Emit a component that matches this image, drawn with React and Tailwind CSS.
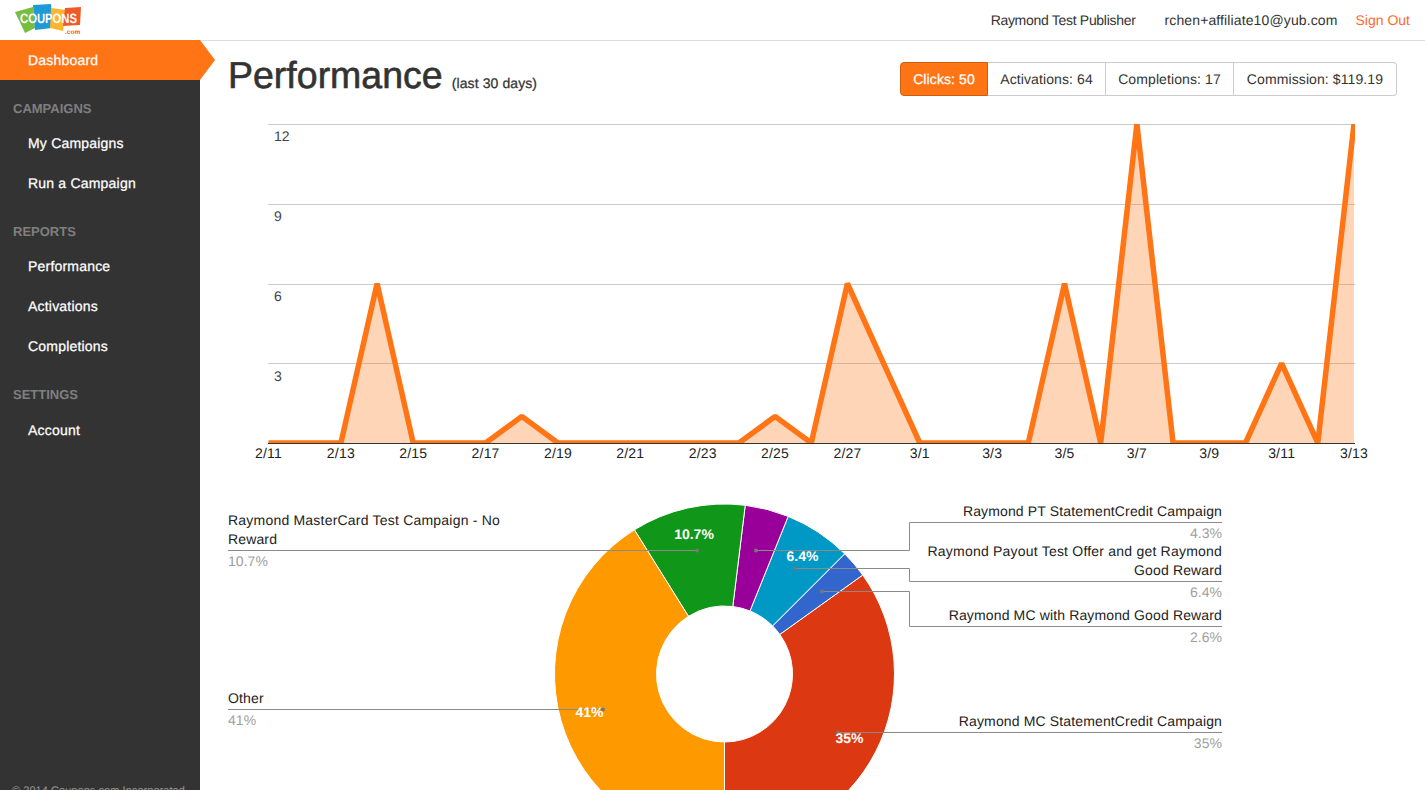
import React from "react";

// =============================
// Data
// =============================
const NAV = [
  { title: "Campaigns", items: ["My Campaigns", "Run a Campaign"], head: "h-[43px]" },
  { title: "Reports", items: ["Performance", "Activations", "Completions"], head: "h-[43px]" },
  { title: "Settings", items: ["Account"], head: "h-[44px]" },
];

const STATS = [
  { label: "Clicks: 50", w: "w-[88px]", cls: "bg-[#ff7414] text-white border-l border-[#cc5f12] rounded-l [-webkit-text-stroke:0.25px]" },
  { label: "Activations: 64", w: "w-[118px]", cls: "bg-white border-[#cccccc]" },
  { label: "Completions: 17", w: "w-[128px]", cls: "bg-white border-[#cccccc]" },
  { label: "Commission: $119.19", w: "w-[163px]", cls: "bg-white border-[#cccccc] rounded-r" },
];

const CLICKS = { 3: 6, 7: 1, 14: 1, 16: 6, 17: 3, 22: 6, 24: 12, 28: 3, 30: 12 };
const DATES = ["2/11", "2/13", "2/15", "2/17", "2/19", "2/21", "2/23", "2/25", "2/27", "3/1", "3/3", "3/5", "3/7", "3/9", "3/11", "3/13"];

const xAt = (i) => 268.5 + (i * 1085.5) / 30;
const yAt = (v) => 443 - (v * 319) / 12;

const SLICES = [
  { color: "#dc3912", from: 54.4, to: 180 },
  { color: "#3366cc", from: 45, to: 54.4 },
  { color: "#0099c6", from: 22, to: 45 },
  { color: "#990099", from: 7, to: 22 },
  { color: "#109618", from: -32, to: 7 },
  { color: "#ff9900", from: 180, to: 328 },
];

// =============================
// Helpers: donut slice path
// =============================
function slicePath(from, to) {
  const cx = 724.5, cy = 674, R = 170, r = 68;
  const pt = (rad, deg) => {
    const a = (deg * Math.PI) / 180;
    return `${(cx + rad * Math.sin(a)).toFixed(2)} ${(cy - rad * Math.cos(a)).toFixed(2)}`;
  };
  const big = to - from > 180 ? 1 : 0;
  return `M${pt(R, from)} A${R} ${R} 0 ${big} 1 ${pt(R, to)} L${pt(r, to)} A${r} ${r} 0 ${big} 0 ${pt(r, from)} Z`;
}

// =============================
// Components
// =============================
function Logo() {
  return (
    <svg width="80" height="34" viewBox="15 5 80 34" className="block">
      <polygon points="15,14 33,9 35,30 25,35" fill="#79bd3e" />
      <polygon points="33,7 51,6 52,30 35,32" fill="#1e9ad6" />
      <polygon points="51,10 66,12 63,33 50,30" fill="#fdb52f" />
      <polygon points="65,10 81,9 80,27 63,28" fill="#f05a28" />
      <text x="20" y="25" fontSize="13.5" fontWeight="700" fill="#fff" textLength="57" lengthAdjust="spacingAndGlyphs">COUPONS</text>
      <text x="65" y="35.5" fontSize="6.5" fontWeight="700" fill="#f05a28">.com</text>
    </svg>
  );
}

function LineChart() {
  const points = Array.from({ length: 31 }, (_, i) => `${xAt(i).toFixed(1)},${yAt(CLICKS[i] || 0).toFixed(1)}`);
  return (
    <svg width="1225" height="370" viewBox="200 110 1225 370" className="block">
      <defs>
        <clipPath id="plot"><rect x="268" y="124" width="1087" height="319.5" /></clipPath>
      </defs>
      {[124.5, 204.5, 284.5, 363.5].map((y) => (
        <line key={y} x1="268" x2="1355" y1={y} y2={y} stroke="#cccccc" />
      ))}
      <g clipPath="url(#plot)">
        <polygon points={`268.5,443 ${points.join(" ")} 1354,443`} fill="#ff7414" fillOpacity="0.3" />
        <polyline points={points.join(" ")} fill="none" stroke="#ff7414" strokeWidth="5.5" strokeLinejoin="bevel" />
      </g>
      <line x1="268" x2="1355" y1="443.5" y2="443.5" stroke="#333333" />
      {[["12", 141], ["9", 221], ["6", 301], ["3", 381]].map(([t, y]) => (
        <text key={t} x="274" y={y} fontSize="14" fill="#444444">{t}</text>
      ))}
      {DATES.map((d, i) => (
        <text key={d} x={xAt(i * 2)} y="458" fontSize="14" letterSpacing="0.2" fill="#222222" textAnchor="middle">{d}</text>
      ))}
    </svg>
  );
}

function Leader({ d, x, y }) {
  return (
    <g>
      <path d={d} fill="none" stroke="#8a8a8a" />
      <circle cx={x} cy={y} r="2" fill="#777777" />
    </g>
  );
}

function PieChart() {
  const name = { fontSize: 14, fill: "#222222", letterSpacing: 0.14 };
  const wide = { fontSize: 14, fill: "#222222", letterSpacing: 0.21 };
  const pct = { fontSize: 14, fill: "#9e9e9e", letterSpacing: 0.05 };
  const inner = { fontSize: 14, fontWeight: 700, fill: "#ffffff", textAnchor: "middle" };
  return (
    <svg width="1225" height="310" viewBox="200 480 1225 310" className="block">
      {SLICES.map((s) => (
        <path key={s.color} d={slicePath(s.from, s.to)} fill={s.color} stroke="#ffffff" strokeWidth="1" />
      ))}
      <Leader d="M228 550.5H697" x={697} y={550.5} />
      <Leader d="M228 709.5H603" x={603} y={709.5} />
      <Leader d="M756 550.5H909.5V522.5H1222" x={756} y={550.5} />
      <Leader d="M795 568.5H909.5V581.5H1222" x={795} y={568.5} />
      <Leader d="M822 591.5H909.5V626.5H1222" x={822} y={591.5} />
      <Leader d="M838 732.5H1222" x={838} y={732.5} />

      <text x="694" y="539" {...inner}>10.7%</text>
      <text x="802.5" y="561" {...inner}>6.4%</text>
      <text x="589.5" y="717" {...inner}>41%</text>
      <text x="849.5" y="743" {...inner}>35%</text>

      <text x="228" y="525" {...wide}>Raymond MasterCard Test Campaign - No</text>
      <text x="228" y="544" {...name}>Reward</text>
      <text x="228" y="566" {...pct}>10.7%</text>
      <text x="228" y="703" {...name}>Other</text>
      <text x="228" y="725" {...pct}>41%</text>

      <g textAnchor="end">
        <text x="1222" y="516" {...name}>Raymond PT StatementCredit Campaign</text>
        <text x="1222" y="538" {...pct}>4.3%</text>
        <text x="1222" y="556" {...wide}>Raymond Payout Test Offer and get Raymond</text>
        <text x="1222" y="575" {...name}>Good Reward</text>
        <text x="1222" y="597" {...pct}>6.4%</text>
        <text x="1222" y="620" {...name}>Raymond MC with Raymond Good Reward</text>
        <text x="1222" y="642" {...pct}>2.6%</text>
        <text x="1222" y="726" {...name}>Raymond MC StatementCredit Campaign</text>
        <text x="1222" y="748" {...pct}>35%</text>
      </g>
    </svg>
  );
}

function Sidebar() {
  return (
    <aside className="w-[200px] shrink-0 bg-[#333333] flex flex-col tracking-[0.2px] [-webkit-text-stroke:0.25px]">
      <div className="relative h-10 bg-[#ff7414] pl-7 flex items-center text-white">
        Dashboard
        <div className="absolute left-full top-0 w-0 h-0 border-y-[20px] border-y-transparent border-l-[15px] border-l-[#ff7414]" />
      </div>
      {NAV.map((group) => (
        <div key={group.title}>
          <div className={`${group.head} pt-[19px] pl-[13px] leading-5 uppercase font-bold text-[13px] tracking-normal text-[#7f7f7f] [-webkit-text-stroke:0px]`}>{group.title}</div>
          {group.items.map((item) => (
            <div key={item} className="h-10 pl-7 flex items-center text-white">{item}</div>
          ))}
        </div>
      ))}
      <div className="mt-auto h-[7px] pl-3 leading-4 text-[11px] text-[#999999] whitespace-nowrap tracking-[0.05px] [-webkit-text-stroke:0px]">© 2014 Coupons.com Incorporated</div>
    </aside>
  );
}

export default function App() {
  return (
    <div className="w-[1425px] h-[790px] overflow-hidden bg-white text-sm text-[#333333] flex flex-col font-['Liberation_Sans',Arial,sans-serif] [text-rendering:geometricPrecision]">
      {/* Top bar */}
      <header className="h-10 shrink-0 flex items-center pl-[15px] pr-[15px]">
        <Logo />
        <div className="ml-auto flex items-center">
          <span className="tracking-[-0.3px]">Raymond Test Publisher</span>
          <span className="ml-[29px] tracking-[0.12px]">rchen+affiliate10@yub.com</span>
          <a className="ml-[18px] text-[#ff6a2b]">Sign Out</a>
        </div>
      </header>

      <div className="flex flex-1 min-h-0">
        <Sidebar />
        <main className="flex-1 min-w-0 border-t border-[#dddddd]">
          {/* Title and stats */}
          <div className="h-[69px] pl-7 pr-7 flex items-start justify-between">
            <h1 className="mt-[12px] flex items-baseline">
              <span className="text-[37.5px] leading-[44px] [-webkit-text-stroke:0.6px]">Performance</span>
              <span className="ml-[9px] tracking-[0.1px] [-webkit-text-stroke:0.25px]">(last 30 days)</span>
            </h1>
            <div className="mt-[21px] flex h-[34px] tracking-[0.1px]">
              {STATS.map((s) => (
                <div key={s.label} className={`${s.w} ${s.cls} border-y border-r flex items-center justify-center`}>
                  {s.label}
                </div>
              ))}
            </div>
          </div>
          <LineChart />
          <PieChart />
        </main>
      </div>
    </div>
  );
}
